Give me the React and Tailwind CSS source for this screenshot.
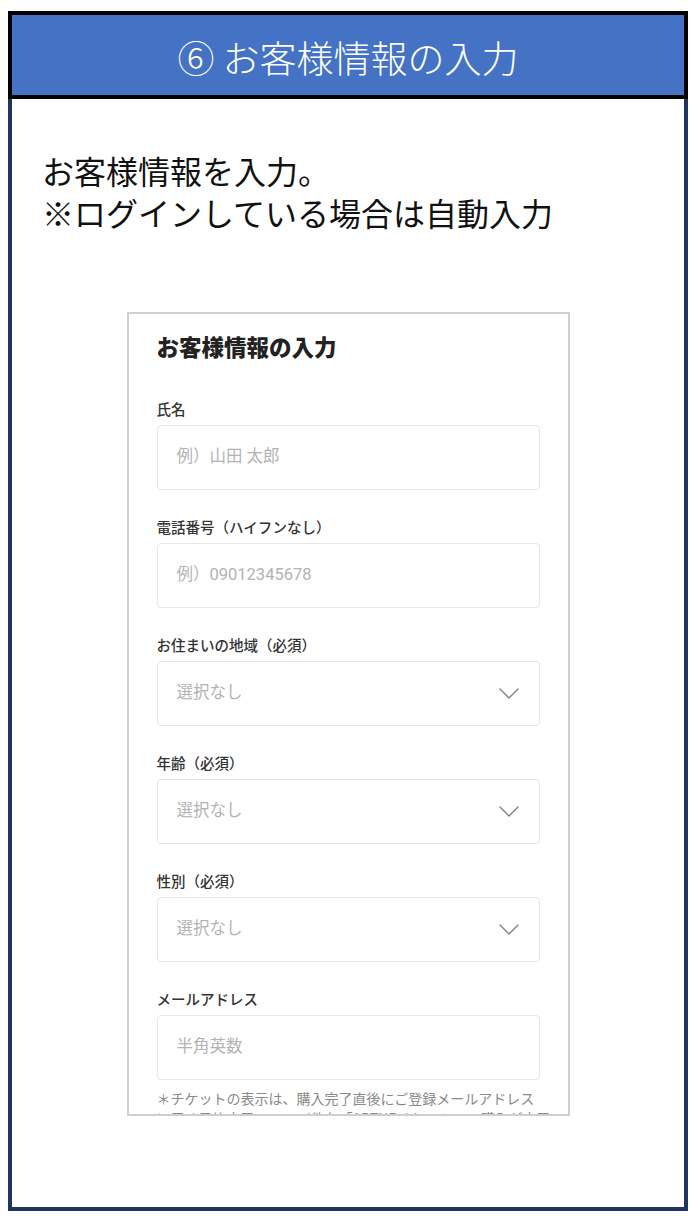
import React from "react";

const jp = { fontFamily: '"Noto Sans CJK JP", "Noto Sans", sans-serif' };

function Chevron() {
  return (
    <svg width="20" height="11" viewBox="0 0 20 11" className="shrink-0">
      <polyline points="1,1 10,10 19,1" fill="none" stroke="#808080" strokeWidth="1.4" strokeLinejoin="round" strokeLinecap="round" />
    </svg>
  );
}

function Field({ label, placeholder, select }) {
  return (
    <div className="flex flex-col">
      <div className="text-[14.5px] leading-[20px] font-medium text-[#333333]">{label}</div>
      <div className="mt-[6px] h-[65px] rounded-[4px] border border-[#e6e6e6] bg-white flex items-center justify-between pl-[19px] pr-[20px]">
        <span className="text-[16.5px] text-[#b3b3b3]" style={{ fontFamily: 'Roboto, "Noto Sans CJK JP", sans-serif' }}>
          {placeholder}
        </span>
        {select && <Chevron />}
      </div>
    </div>
  );
}

export default function App() {
  return (
    <div className="w-[700px] h-[1222px] bg-white pt-[11px] pl-[8px]" style={jp}>
      <div className="w-[680px]">
        <div className="h-[88px] border-4 border-black bg-[#4472c4] flex items-center justify-center">
          <span className="text-white text-[37px] leading-none font-light pt-[4px]">⑥ お客様情報の入力</span>
        </div>
        <div className="h-[1112px] border-x-4 border-b-4 border-[#1f3560] pt-[50px]">
          <div className="pl-[30px] text-[32px] leading-[42px] text-[#111111]">
            <div>お客様情報を入力。</div>
            <div>※ログインしている場合は自動入力</div>
          </div>
          <div className="mt-[79px] mx-auto w-[443px] h-[804px] border-2 border-[#cfcfcf] overflow-hidden px-[28px] pt-[18px]">
            <h2 className="text-[22.5px] leading-[28px] font-black text-[#222222]">お客様情報の入力</h2>
            <div className="mt-[39px] flex flex-col gap-[27px]">
              <Field label="氏名" placeholder="例）山田 太郎" />
              <Field label="電話番号（ハイフンなし）" placeholder="例）09012345678" />
              <Field label="お住まいの地域（必須）" placeholder="選択なし" select />
              <Field label="年齢（必須）" placeholder="選択なし" select />
              <Field label="性別（必須）" placeholder="選択なし" select />
              <Field label="メールアドレス" placeholder="半角英数" />
            </div>
            <p className="mt-[8px] text-[14px] leading-[20px] text-[#8a8a8a] whitespace-nowrap">
              ＊チケットの表示は、購入完了直後にご登録メールアドレス
              <br />
              に届く予約完了メール（件名「ARTNEチケット」の購入が完了
            </p>
          </div>
        </div>
      </div>
    </div>
  );
}
